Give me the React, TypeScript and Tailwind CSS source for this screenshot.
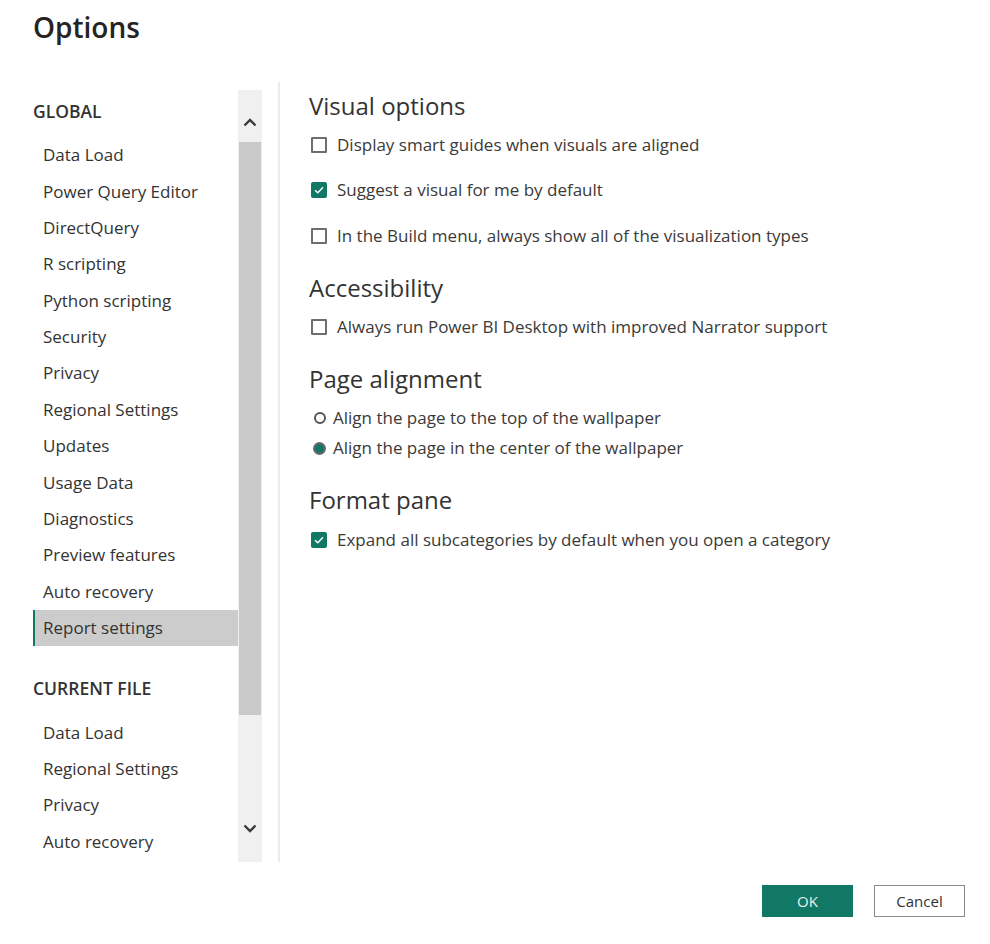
const FONT = "font-['Open_Sans','Noto_Sans',sans-serif]"

const globalItems = [
  'Data Load',
  'Power Query Editor',
  'DirectQuery',
  'R scripting',
  'Python scripting',
  'Security',
  'Privacy',
  'Regional Settings',
  'Updates',
  'Usage Data',
  'Diagnostics',
  'Preview features',
  'Auto recovery',
  'Report settings',
]

const fileItems = ['Data Load', 'Regional Settings', 'Privacy', 'Auto recovery']

function NavItem({ label, active }: { label: string; active?: boolean }) {
  return (
    <div
      className={
        'h-[36.4px] flex items-center text-[17px] text-[#333333] ' +
        (active ? 'bg-[#cccccc] border-l-2 border-[#117865] pl-[8px]' : 'pl-[10px]')
      }
    >
      {label}
    </div>
  )
}

function Checkbox({ checked }: { checked?: boolean }) {
  if (checked) {
    return (
      <span className="w-[16px] h-[16px] shrink-0 bg-[#117865] rounded-[2px] flex items-center justify-center">
        <svg width="10" height="8" viewBox="0 0 10 8" fill="none">
          <path d="M1 4.2 L3.8 6.8 L9 1.2" stroke="#ffffff" strokeWidth="1.4" />
        </svg>
      </span>
    )
  }
  return <span className="w-[16px] h-[16px] shrink-0 border-2 border-[#6e6e6e] rounded-[1px] bg-white" />
}

function Radio({ checked }: { checked?: boolean }) {
  if (checked) {
    return (
      <span className="w-[13px] h-[13px] shrink-0 rounded-full border-2 border-[#6a6a6a] bg-[#117865]" />
    )
  }
  return <span className="w-[12px] h-[12px] shrink-0 rounded-full border-2 border-[#555555] bg-white" />
}

function CheckRow({ label, checked, className }: { label: string; checked?: boolean; className?: string }) {
  return (
    <div className={'flex items-center gap-[10px] h-[24px] pl-[2px] text-[17px] text-[#3b3a39] ' + (className ?? '')}>
      <Checkbox checked={checked} />
      <span>{label}</span>
    </div>
  )
}

function RadioRow({ label, checked, className }: { label: string; checked?: boolean; className?: string }) {
  return (
    <div className={'flex items-center gap-[7px] h-[24px] pl-[4px] text-[17px] text-[#3b3a39] ' + (className ?? '')}>
      <span className="w-[13px] flex justify-center">
        <Radio checked={checked} />
      </span>
      <span>{label}</span>
    </div>
  )
}

function Heading({ children, className }: { children: string; className?: string }) {
  return <div className={'text-[24px] leading-[30px] text-[#333333] ' + (className ?? '')}>{children}</div>
}

export default function App() {
  return (
    <div className={`w-[990px] h-[944px] bg-white overflow-hidden ${FONT}`}>
      <div className="h-[82px] pl-[33px] pt-[8px]">
        <h1 className="text-[28px] leading-[38px] font-semibold text-[#252423]">Options</h1>
      </div>

      <div className="flex h-[780px]">
        {/* left nav */}
        <div className="w-[205px] ml-[33px] flex flex-col">
          <div className="h-[54.7px] pt-[18px] text-[17.5px] leading-[22px] font-semibold text-[#333333]">GLOBAL</div>
          {globalItems.map(item => (
            <NavItem key={'g' + item} label={item} active={item === 'Report settings'} />
          ))}
          <div className="h-[68px] pt-[31px] text-[17.5px] leading-[22px] font-semibold text-[#333333]">CURRENT FILE</div>
          {fileItems.map(item => (
            <NavItem key={'f' + item} label={item} />
          ))}
        </div>

        {/* scrollbar */}
        <div className="w-[24px] mt-[8px] h-[772px] bg-[#f0f0f0] flex flex-col">
          <div className="h-[52px] flex items-center justify-center pt-[12px]">
            <svg width="14" height="9" viewBox="0 0 14 9" fill="none">
              <path d="M1.5 7.5 L7 2 L12.5 7.5" stroke="#3a3a3a" strokeWidth="2.4" />
            </svg>
          </div>
          <div className="h-[573px] mx-[1px] bg-[#c9c9c9]" />
          <div className="flex-1 flex flex-col items-center justify-end pb-[29px]">
            <svg width="14" height="9" viewBox="0 0 14 9" fill="none">
              <path d="M1.5 1.5 L7 7 L12.5 1.5" stroke="#3a3a3a" strokeWidth="2.4" />
            </svg>
          </div>
        </div>

        {/* divider */}
        <div className="w-[2px] ml-[16px] bg-[#ececec]" />

        {/* content */}
        <div className="pl-[29px] pt-[9px] flex flex-col">
          <Heading>Visual options</Heading>
          <CheckRow className="mt-[12px]" label="Display smart guides when visuals are aligned" />
          <CheckRow className="mt-[21px]" label="Suggest a visual for me by default" checked />
          <CheckRow className="mt-[22px]" label="In the Build menu, always show all of the visualization types" />

          <Heading className="mt-[25px]">Accessibility</Heading>
          <CheckRow className="mt-[12px]" label="Always run Power BI Desktop with improved Narrator support" />

          <Heading className="mt-[25px]">Page alignment</Heading>
          <RadioRow className="mt-[12px]" label="Align the page to the top of the wallpaper" />
          <RadioRow className="mt-[6px]" label="Align the page in the center of the wallpaper" checked />

          <Heading className="mt-[25px]">Format pane</Heading>
          <CheckRow className="mt-[13px]" label="Expand all subcategories by default when you open a category" checked />
        </div>
      </div>

      <div className="flex justify-end gap-[21px] pr-[25px] pt-[23px]">
        <button className="w-[91px] h-[32px] bg-[#117865] text-[#e6f2ef] text-[15px]">OK</button>
        <button className="w-[91px] h-[32px] bg-white border border-[#8a8a8a] text-[#333333] text-[15px]">Cancel</button>
      </div>
    </div>
  )
}
